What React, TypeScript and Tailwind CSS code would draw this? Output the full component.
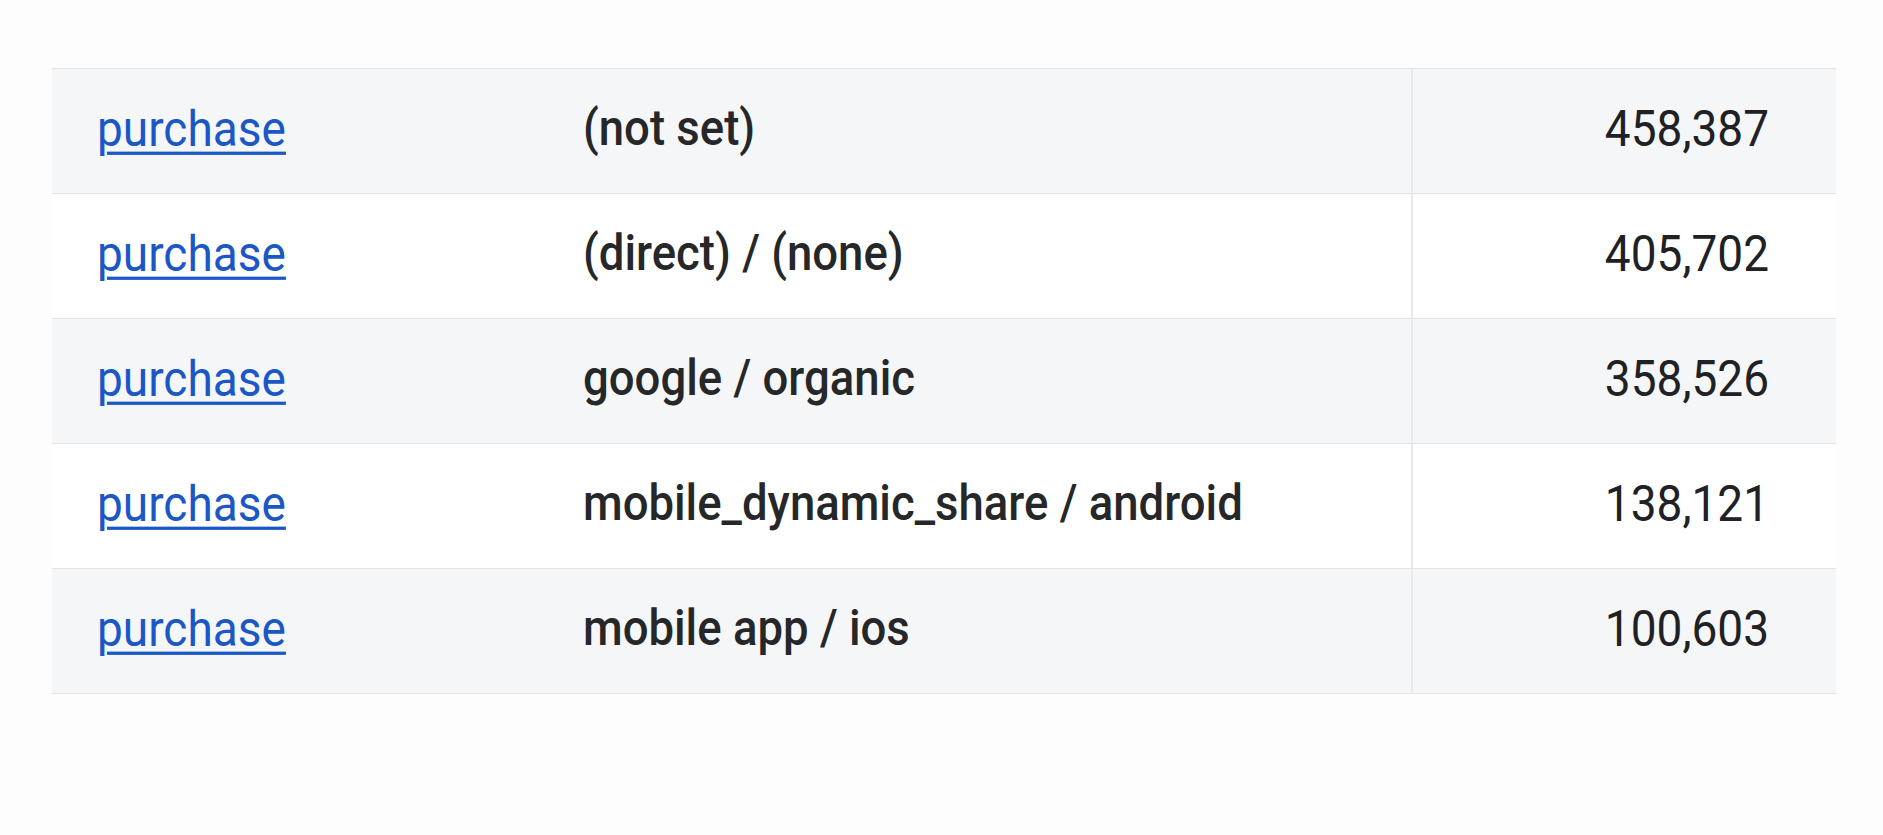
const rows = [
  { event: "purchase", source: "(not set)", count: "458,387" },
  { event: "purchase", source: "(direct) / (none)", count: "405,702" },
  { event: "purchase", source: "google / organic", count: "358,526" },
  { event: "purchase", source: "mobile_dynamic_share / android", count: "138,121" },
  { event: "purchase", source: "mobile app / ios", count: "100,603" },
];

export default function App() {
  return (
    <div
      className="min-h-[835px] w-full bg-[#fdfdfd] pl-[52px] pr-[47px] pt-[68px]"
      style={{ fontFamily: "Roboto, 'Liberation Sans', sans-serif" }}
    >
      <div className="border-t border-[#e4e5e8]">
        {rows.map((r, i) => (
          <div
            key={i}
            className={
              "grid h-[125px] grid-cols-[531px_828px_1fr] border-b border-[#e4e5e8] " +
              (i % 2 === 0 ? "bg-[#f5f6f8]" : "bg-white")
            }
          >
            <div className="flex items-center pb-[4px] pl-[45px]">
              <a
                href="#"
                className="inline-block scale-y-[1.08] text-[46px] text-[#1b58c6] underline decoration-[3px] underline-offset-[5px]"
              >
                {r.event}
              </a>
            </div>
            <div className="flex items-center pb-[4px]">
              <span className="inline-block scale-y-[1.08] text-[45.5px] font-medium text-[#262729]">
                {r.source}
              </span>
            </div>
            <div className="flex items-center justify-end border-l-2 border-[#e9eaec] pb-[4px] pr-[67px]">
              <span className="inline-block scale-y-[1.08] text-[46px] text-[#202124]">
                {r.count}
              </span>
            </div>
          </div>
        ))}
      </div>
    </div>
  );
}
